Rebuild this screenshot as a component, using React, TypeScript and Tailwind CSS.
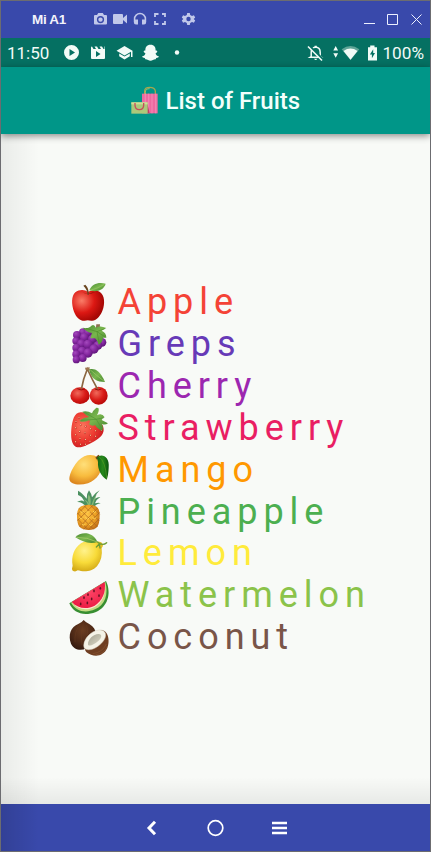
import type { ReactNode } from "react";

function Apple() {
  return (
    <>
      <path d="M84 51C75 43 58 42 46 52C34 63 34 87 42 110C49 129 62 138 74 137C80 135 86 135 94 137C109 139 124 121 130 99C136 76 131 54 114 48C102 44 92 47 84 51Z" fill="url(#appleRed)" />
      <path d="M67 51Q84 64 106 50Q91 55 84 56Q76 56 67 51Z" fill="#84110b" />
      <path d="M86 60Q88 41 76 29L70 32Q82 43 83 60Z" fill="#69451f" />
      <path d="M88 46C96 27 114 21 137 26C132 44 111 53 88 46Z" fill="url(#leaf)" />
      <path d="M91 45Q108 43 133 28" stroke="#9bc766" strokeWidth="2" fill="none" />
    </>
  );
}

const grapeDots: [number, number, number][] = [
  [69, 172, 12], [84, 172, 12], [51, 180, 12], [126, 202, 13], [73, 187, 13], [48, 198, 11],
  [97, 192, 13], [114, 211, 13], [64, 206, 13], [84, 208, 14], [102, 222, 14], [49, 218, 12],
  [66, 228, 13], [84, 234, 14], [49, 238, 12], [68, 249, 12], [49, 254, 11],
];

function Grapes() {
  return (
    <>
      <path d="M107 166L109 148L120 148Q121 158 115 170Z" fill="#8f6f52" />
      <path d="M60 170L90 170L125 205L95 238L52 252L44 200Z" fill="#6d1c88" />
      {grapeDots.map(([cx, cy, r], i) => (
        <circle key={i} cx={cx} cy={cy} r={r} fill="url(#grape)" />
      ))}
      <path d="M68 158Q84 162 91 155Q101 144 108 158Q120 150 139 159L125 167Q139 173 139 188L129 188Q128 202 116 209Q111 194 105 190L91 190Q94 180 96 174Q80 171 68 158Z" fill="url(#leaf)" />
      <path d="M78 160L111 170L134 161M111 170L134 185M111 170L117 202" stroke="#4e8e2b" strokeWidth="2" fill="none" />
    </>
  );
}

function Cherries() {
  return (
    <>
      <path d="M87 28C103 24 119 29 135 66C112 66 94 60 87 28Z" fill="url(#leaf)" />
      <path d="M89 28Q108 45 134 65" stroke="#a0cd68" strokeWidth="2" fill="none" />
      <circle cx="116" cy="107" r="27" fill="url(#cherryRight)" />
      <ellipse cx="60" cy="107" rx="29" ry="25" fill="url(#cherryLeft)" />
      <path d="M64 88Q70 55 82 27Q97 60 113 88" stroke="#8b6640" strokeWidth="5" fill="none" />
      <path d="M75 23L89 22L88 30L77 30Z" fill="#9c7650" />
      <path d="M52 86Q63 93 75 87M105 87Q114 93 124 87" stroke="#980e0b" strokeWidth="3" fill="none" />
    </>
  );
}

const seeds: [number, number][] = [
  [57, 174], [48, 185], [62, 195], [47, 204], [77, 199], [92, 207], [107, 213], [124, 211],
  [59, 215], [75, 219], [91, 226], [107, 229], [47, 225], [60, 236], [76, 239], [90, 244],
  [47, 246], [61, 253], [76, 253],
];

function Strawberry() {
  return (
    <>
      <path d="M66 157C43 153 37 181 34 207C32 231 34 252 47 260C61 267 86 254 109 240C127 229 135 216 129 198C120 179 90 157 66 157Z" fill="url(#berry)" />
      {seeds.map(([x, y], i) => (
        <g key={i}>
          <ellipse cx={x} cy={y} rx="2.5" ry="3.5" fill="#b91919" />
          <ellipse cx={x} cy={y - 0.5} rx="1.6" ry="2.2" fill="#ffe4aa" />
        </g>
      ))}
      <path d="M67 155Q82 151 96 160Q99 151 109 143L115 144Q119 151 111 166Q126 158 134 172Q128 173 125 180L144 190Q136 196 125 192Q132 203 126 212Q113 208 105 195Q98 200 87 193Q92 185 88 180Q69 190 58 182Q72 172 87 171Q76 164 67 155Z" fill="url(#leaf)" />
      <path d="M74 157L109 178L63 181M109 178L132 173M109 178L125 205" stroke="#4f9234" strokeWidth="2" fill="none" />
    </>
  );
}

function Mango() {
  return (
    <>
      <path d="M28 103C27 88 46 46 73 34C95 24 119 34 124 52C130 78 111 105 84 115C59 122 31 120 28 103Z" fill="url(#mango)" />
      <path d="M106 38L115 29L120 34L111 44Z" fill="#754315" />
      <path d="M111 38C123 24 150 33 146 68Q145 91 140 104C125 95 112 74 114 51Z" fill="url(#darkLeaf)" />
      <path d="M116 34Q137 49 140 101" stroke="#5b9d26" strokeWidth="2" fill="none" />
    </>
  );
}

function Pineapple() {
  return (
    <>
      <path d="M78 188Q67 173 51 174Q64 165 73 173Q67 157 54 153Q54 146 54 140Q66 146 80 164Q80 148 87 139Q95 150 96 160Q104 147 119 139Q107 150 104 164Q115 158 121 159Q109 166 105 178Q117 174 122 178Q108 180 102 190Z" fill="#4c9060" />
      <path d="M89 184Q80 166 86 151Q95 165 91 183ZM94 184Q99 165 110 151Q103 169 99 184ZM85 185Q81 173 71 166Q84 170 90 186Z" fill="#86b976" />
      <path d="M69 185Q85 179 104 185C120 190 120 210 118 228C117 248 108 258 87 258C63 258 53 249 52 229C49 208 52 188 69 185Z" fill="url(#pine)" />
      <path d="M57 193L113 249M52 207L101 256M72 185L118 231M92 184L119 211M53 225L83 256M113 192L59 249M119 205L71 256M99 184L52 230M79 183L52 211M118 224L86 257" stroke="#a8601d" strokeWidth="2" />
      <path d="M61 202L66 206L71 201M79 201L84 206L89 201M99 201L104 206L109 201M58 220L64 225L69 220M76 220L83 226L89 220M98 220L103 225L109 220M66 240L72 244L77 239M86 240L92 245L98 239" stroke="#ffd253" strokeWidth="3" fill="none" />
    </>
  );
}

function Lemon() {
  return (
    <>
      <path d="M106 54Q124 49 128 60Q131 68 125 73Q129 105 111 127C93 146 68 143 53 139Q46 145 38 140Q34 135 38 125C33 98 42 72 63 58C76 49 95 49 106 54Z" fill="url(#lemon)" />
      <path d="M112 54Q128 67 140 56M118 60L109 69M118 60L120 72" stroke="#6c9d34" strokeWidth="4" strokeLinecap="round" fill="none" />
      <path d="M46 40C62 22 99 22 112 54C89 61 67 54 46 40Z" fill="url(#leaf)" />
      <path d="M49 40Q81 39 112 54" stroke="#b1d26f" strokeWidth="2" fill="none" />
    </>
  );
}

const melonSeeds: [number, number][] = [
  [121, 193], [102, 201], [117, 215], [84, 212], [95, 225], [72, 221], [82, 237], [62, 240],
];

function Watermelon() {
  return (
    <>
      <path d="M28 238C40 267 70 278 108 264C141 250 156 210 138 171Z" fill="#388f32" />
      <path d="M33 236C47 261 75 269 105 256C135 243 146 211 136 174Z" fill="#c4dc83" />
      <path d="M36 235C52 256 79 262 104 249C127 236 140 207 133 176Z" fill="#ffe7d0" />
      <path d="M35 234C54 254 80 257 104 245C126 232 139 205 134 174Z" fill="url(#melon)" />
      {melonSeeds.map(([x, y], i) => <ellipse key={i} cx={x} cy={y} rx="2.5" ry="4.2" fill="#641322" />)}
    </>
  );
}

function Coconut() {
  return (
    <>
      <path d="M71 288Q78 296 89 301C113 315 113 343 95 360C75 385 42 381 33 359C24 334 31 308 56 299Q66 295 71 288Z" fill="url(#coco)" />
      <path d="M62 300Q42 321 45 355M70 299Q59 331 66 364M79 303Q86 320 79 346" stroke="#704022" strokeWidth="2" fill="none" opacity=".55" />
      <path d="M75 375C69 354 94 324 121 318C145 317 151 350 142 372C132 394 111 399 93 392C81 388 75 382 75 375Z" fill="#6f3e22" />
      <path d="M98 389Q128 385 139 360M107 392Q132 390 142 367" stroke="#8f5a37" strokeWidth="1.5" fill="none" />
      <path d="M73 373C65 350 91 321 116 318C137 315 143 334 130 351C112 375 84 383 73 373Z" fill="#f5f3e7" stroke="#d9d5c6" strokeWidth="1.5" />
      <path d="M84 362C83 345 101 331 115 330C127 329 127 341 114 352C101 363 88 368 84 362Z" fill="url(#flesh)" />
    </>
  );
}

const fruits: { name: string; color: string; box: string; art: ReactNode }[] = [
  { name: "Apple", color: "text-[#f44336]", box: "24 15 126 126", art: <Apple /> },
  { name: "Greps", color: "text-[#673ab7]", box: "24 141 126 126", art: <Grapes /> },
  { name: "Cherry", color: "text-[#9c27b0]", box: "24 12 126 126", art: <Cherries /> },
  { name: "Strawberry", color: "text-[#e91e63]", box: "24 138 126 126", art: <Strawberry /> },
  { name: "Mango", color: "text-[#ff9800]", box: "24 9 126 126", art: <Mango /> },
  { name: "Pineapple", color: "text-[#4caf50]", box: "24 135 126 126", art: <Pineapple /> },
  { name: "Lemon", color: "text-[#ffeb3b]", box: "24 21 126 126", art: <Lemon /> },
  { name: "Watermelon", color: "text-[#8bc34a]", box: "24 147 126 126", art: <Watermelon /> },
  { name: "Coconut", color: "text-[#795548]", box: "24 273 126 126", art: <Coconut /> },
];

function Gradients() {
  const radial: [string, string, string, string, string, string][] = [
    ["appleRed", "30%", "35%", "#fa7d68", "#dc1813", "#a70805"],
    ["grape", "35%", "30%", "#a449bd", "#84279f", "#64197f"],
    ["cherryLeft", "38%", "35%", "#f06a5b", "#d91c18", "#b70908"],
    ["cherryRight", "38%", "35%", "#f06a5b", "#d91c18", "#b70908"],
    ["berry", "35%", "40%", "#fb765e", "#ed3b31", "#ca1b20"],
    ["mango", "45%", "32%", "#ffdf7a", "#f8bc3e", "#dc861e"],
    ["lemon", "40%", "32%", "#fff28c", "#f8db39", "#d5ac18"],
    ["pine", "42%", "40%", "#ffc647", "#eda124", "#b96715"],
    ["coco", "50%", "35%", "#6b3d21", "#4f2a17", "#32180e"],
    ["melon", "50%", "40%", "#ff4466", "#f12b50", "#e9173f"],
  ];
  return (
    <svg className="absolute h-0 w-0" aria-hidden="true">
      <defs>
        {radial.map(([id, cx, cy, a, b, c]) => (
          <radialGradient key={id} id={id} cx={cx} cy={cy} r="68%">
            <stop stopColor={a} /><stop offset=".58" stopColor={b} /><stop offset="1" stopColor={c} />
          </radialGradient>
        ))}
        <linearGradient id="leaf" x2="1" y2="1"><stop stopColor="#4b8b35" /><stop offset=".5" stopColor="#79b64d" /><stop offset="1" stopColor="#43832d" /></linearGradient>
        <linearGradient id="darkLeaf"><stop stopColor="#136413" /><stop offset=".5" stopColor="#26891b" /><stop offset="1" stopColor="#07520b" /></linearGradient>
        <linearGradient id="flesh" x2="1" y2="1"><stop stopColor="#a3a190" /><stop offset="1" stopColor="#dedbc9" /></linearGradient>
      </defs>
    </svg>
  );
}

function WindowBar() {
  return (
    <div className="flex h-[37px] shrink-0 items-center bg-[#3949ab] text-[#c1c8ea]">
      <span className="ml-[31px] w-[61px] font-['Liberation_Sans',sans-serif] text-[13.5px] leading-5 font-bold tracking-[-0.3px] text-[#f2f3fb]">Mi A1</span>
      <svg className="-mt-[2px]" width="104" height="14" viewBox="0 0 104 14" fill="currentColor">
        <path fillRule="evenodd" d="M1 3H4L5.2 1H9.8L11 3H13Q14 3 14 4V11.5Q14 12.5 13 12.5H2Q1 12.5 1 11.5V4Q1 3 2 3ZM7.5 4A3.6 3.6 0 1 0 7.5 11.2A3.6 3.6 0 1 0 7.5 4ZM7.5 5.4A2.2 2.2 0 1 1 7.5 9.8A2.2 2.2 0 1 1 7.5 5.4Z" />
        <path d="M20 3Q20 2 21 2H29Q30 2 30 3V6L34 2.5V11.5L30 8V11Q30 12 29 12H21Q20 12 20 11Z" />
        <path d="M42.3 12.5H45V7.5H42.3V7A4.7 4.7 0 0 1 51.7 7V7.5H49V12.5H51Q53.2 12.5 53.2 10V7A6.2 6.2 0 0 0 40.8 7V10Q40.8 12.5 43 12.5Z" />
        <path d="M62 5V2H65.5M69 2H72V5M72 9V12H69M65.5 12H62V9" stroke="currentColor" strokeWidth="1.8" fill="none" />
        <path fillRule="evenodd" d="M94.2 1H96.8L97.2 3L99 4L100.9 3.3L102.2 5.5L100.7 7L102.2 8.5L100.9 10.7L99 10L97.2 11L96.8 13H94.2L93.8 11L92 10L90.1 10.7L88.8 8.5L90.3 7L88.8 5.5L90.1 3.3L92 4L93.8 3ZM95.5 4.8A2.2 2.2 0 1 0 95.5 9.2A2.2 2.2 0 1 0 95.5 4.8Z" />
      </svg>
      <svg className="-mt-px mr-[7px] ml-auto" width="60" height="14" viewBox="0 0 60 14" fill="none" stroke="#edf0ff">
        <path d="M1 11.5H12M24.5 2.5H34.5V12.5H24.5ZM48.5 2.5L58.5 12.5M58.5 2.5L48.5 12.5" />
      </svg>
    </div>
  );
}

function StatusBar() {
  return (
    <div className="flex h-[29px] shrink-0 items-center bg-[#057062] font-['Roboto',sans-serif] text-[17px] text-[#f2fbf7]">
      <span className="ml-[6px] w-[56px] pt-[2px]">11:50</span>
      <svg width="120" height="18" viewBox="0 0 120 18" fill="currentColor">
        <path fillRule="evenodd" d="M8.5 1A7.5 7.5 0 1 0 8.5 16A7.5 7.5 0 1 0 8.5 1ZM6.5 5V12L12 8.5Z" />
        <path fillRule="evenodd" d="M28 3.5Q28 2.5 29 2.5L30.5 5H33L31.5 2.5H34L35.5 5H38L36.5 2.5H39L40.5 5H41.5V2.5H42V14Q42 15 41 15H29Q28 15 28 14ZM33 7V13L37.5 10Z" />
        <path d="M53.5 6.7L61.5 2L69.5 6.7V13H68V7.8L61.5 11.5ZM56.2 9.5L61.5 12.6L66.8 9.5V12.2L61.5 15.5L56.2 12.2Z" />
        <path d="M87.5 .7C91.3 .7 92.8 3.1 92.6 6.6C94 6.1 94.7 7.3 94 8.2L92.5 9.4C93 11 94.2 12 95.8 12.3C96 13.4 94.4 13.9 93.2 14.1L92.7 15.3C90.7 15.1 89.5 16.7 87.5 16.7S84.3 15.1 82.3 15.3L81.8 14.1C80.6 13.9 79 13.4 79.2 12.3C80.8 12 82 11 82.5 9.4L81 8.2C80.3 7.3 81 6.1 82.4 6.6C82.2 3.1 83.7 .7 87.5 .7Z" />
        <circle cx="114" cy="8.5" r="2.2" />
      </svg>
      <svg className="ml-auto" width="72" height="18" viewBox="0 0 72 18" fill="currentColor">
        <path d="M4.2 12.5V8.2C4.2 4.8 6 3.5 8.7 3.1C11.5 3.5 13.2 5.2 13.2 8.2V12L14.5 13.3H3Z" fill="none" stroke="currentColor" strokeWidth="1.5" />
        <path d="M7.6 3V1.8H9.8V3M7 14.8H10.4Q8.7 17.4 7 14.8" fill="currentColor" />
        <path d="M2.8 2.5L16 15.7" stroke="#057062" strokeWidth="2.5" />
        <path d="M1 2.5L15 16.5" stroke="currentColor" strokeWidth="1.6" />
        <path d="M26.3 6.5L28.7 2L31.1 6.5ZM26.3 9.2L28.7 13.7L31.1 9.2Z" />
        <path d="M34.7 5.2Q43.5 -1.4 52.3 5.2L43.5 16Z" fill="#5ea497" />
        <path d="M36.5 7Q43.5 2.1 50.5 7L43.5 15.8Z" />
        <path fillRule="evenodd" d="M61 3.2H63.2V1.4H67.5V3.2H70V16.5H61ZM66.2 5.3L62.9 10.5H64.9V14.3L68 9H66.2Z" />
      </svg>
      <span className="mr-[6px] ml-[3px] pt-[2px] text-[17.2px]">100%</span>
    </div>
  );
}

function Bags() {
  return (
    <svg width="28" height="30" viewBox="64 49 84 90" fill="none">
      <path d="M105 79V64Q105 53 120 53T137 64V79" stroke="#a7a64d" strokeWidth="4" />
      <path d="M97 72H144V131H97Z" fill="#ee69a0" />
      <path d="M107 72V131M117 72V131M127 72V131M138 72V131" stroke="#f283b1" strokeWidth="4" />
      <path d="M112 97L120 131H112Z" fill="#b84262" />
      <path d="M65 98H114V132H65Z" fill="#abc97a" />
      <path d="M65 98H114V104H65Z" fill="#d0df98" />
      <path d="M76 100V106Q76 120 89 120T102 106V100" stroke="#c64e5b" strokeWidth="4" />
      <path d="M107 74V68Q107 57 120 57" stroke="#ced66f" strokeWidth="2" />
    </svg>
  );
}

export default function App() {
  return (
    <div className="relative flex h-[852px] w-[431px] flex-col overflow-hidden border border-[#6c6c70] bg-[#f8faf7]">
      <Gradients />
      <WindowBar />
      <StatusBar />
      <header className="z-10 flex h-[67px] shrink-0 items-center bg-[#009688] pl-[130px] shadow-[0_2px_7px_rgba(0,0,0,0.45)]">
        <Bags />
        <h1 className="ml-[6.5px] pt-px font-['Roboto',sans-serif] text-[24px] font-medium text-[#f3fffb]">List of Fruits</h1>
      </header>
      <main className="flex flex-1 flex-col justify-center bg-[linear-gradient(to_top,rgba(0,0,0,0.065),transparent_27px),linear-gradient(to_right,rgba(0,0,0,0.06),transparent_38px)]">
        {fruits.map(({ name, color, box, art }) => (
          <div key={name} className="flex h-[41.85px] items-center pl-[67px]">
            <svg className="-mt-px shrink-0 overflow-visible" width="42" height="42" viewBox={box}>{art}</svg>
            <span className={`ml-[7.5px] pt-[1.4px] font-['Roboto',sans-serif] text-[36px] leading-[42px] tracking-[5.95px] ${color}`}>{name}</span>
          </div>
        ))}
      </main>
      <nav className="flex h-[47px] shrink-0 items-center justify-center bg-[#3949ab] bg-[linear-gradient(to_right,rgba(0,0,0,0.12),transparent_38px)]">
        <svg width="143" height="20" viewBox="0 0 143 20" fill="none" stroke="white">
          <path d="M11 3.7L5 10L11 16.3" strokeWidth="3" />
          <circle cx="71.5" cy="10" r="7.3" strokeWidth="1.7" />
          <path d="M128 5H143M128 10H143M128 15H143" strokeWidth="2.6" />
        </svg>
      </nav>
    </div>
  );
}
